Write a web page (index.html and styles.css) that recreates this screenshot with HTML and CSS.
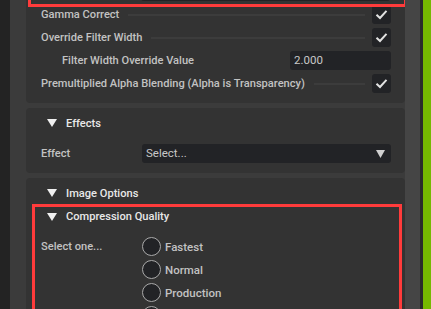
FILE: index.html
```html
<!DOCTYPE html>
<html lang="en">
<head>
    <meta charset="UTF-8">
    <title>Render Settings</title>
    <link rel="stylesheet" href="styles.css">
</head>
<body>
    <div class="edge"></div>
    <div class="scroll">
        <div class="content">
            <!-- Filtering -->
            <div class="card">
                <div class="focus focus-top">
                    <div class="row">
                        <div class="field wide"></div>
                    </div>
                </div>
                <div class="row">
                    <span class="label">Gamma Correct</span>
                    <span class="rule"></span>
                    <span class="check"><svg viewBox="0 0 19 19"><polyline points="4.5,9.8 8,13 14.5,5.8"/></svg></span>
                </div>
                <div class="row">
                    <span class="label">Override Filter Width</span>
                    <span class="rule"></span>
                    <span class="check"><svg viewBox="0 0 19 19"><polyline points="4.5,9.8 8,13 14.5,5.8"/></svg></span>
                </div>
                <div class="row">
                    <span class="label indent">Filter Width Override Value</span>
                    <span class="field number">2.000</span>
                </div>
                <div class="row">
                    <span class="label">Premultiplied Alpha Blending (Alpha is Transparency)</span>
                    <span class="rule"></span>
                    <span class="check"><svg viewBox="0 0 19 19"><polyline points="4.5,9.8 8,13 14.5,5.8"/></svg></span>
                </div>
            </div>

            <!-- Effects -->
            <div class="card">
                <div class="head">
                    <svg class="tri" viewBox="0 0 10 8"><polygon points="0,0 10,0 5,8"/></svg>
                    <span>Effects</span>
                </div>
                <div class="row spaced">
                    <span class="label">Effect</span>
                    <span class="field wide select">Select...
                        <svg class="arrow" viewBox="0 0 9 8"><polygon points="0,0 9,0 4.5,8"/></svg>
                    </span>
                </div>
            </div>

            <!-- Image Options -->
            <div class="card">
                <div class="head">
                    <svg class="tri" viewBox="0 0 10 8"><polygon points="0,0 10,0 5,8"/></svg>
                    <span>Image Options</span>
                </div>
                <div class="focus focus-inner">
                    <div class="head sub">
                        <svg class="tri" viewBox="0 0 10 8"><polygon points="0,0 10,0 5,8"/></svg>
                        <span>Compression Quality</span>
                    </div>
                    <div class="choice">
                        <span class="label pick">Select one...</span>
                        <div class="radios">
                            <label class="radio"><span class="dot"></span>Fastest</label>
                            <label class="radio"><span class="dot"></span>Normal</label>
                            <label class="radio"><span class="dot"></span>Production</label>
                            <label class="radio"><span class="dot"></span></label>
                        </div>
                    </div>
                </div>
            </div>
        </div>
    </div>
    <div class="track"></div>
    <div class="split"></div>
    <div class="accent"></div>
</body>
</html>
```

FILE: styles.css
```css
body {
    margin: 0;
    height: 309px;
    overflow: hidden;
    display: flex;
    background: #232323;
    font-family: Roboto, "Liberation Sans", sans-serif;
    font-size: 11.1px;
    font-weight: 500;
    color: #c2c2c2;
}

.edge {
    width: 10px;
    background: #232323;
}

.scroll {
    flex: 1;
    background: #3b3b3b;
    padding-left: 16px;
    overflow: hidden;
}

.content {
    margin-top: -27px;
    display: flex;
    flex-direction: column;
    gap: 5px;
}

.track {
    width: 15px;
    background: #454545;
}

.split {
    width: 3px;
    background: #2b2b2b;
}

.accent {
    width: 8px;
    background: #76b900;
}

/* Cards */
.card {
    background: #333333;
    border-radius: 4px;
    padding: 4px 0 8px;
}

.row {
    height: 23px;
    display: flex;
    align-items: center;
    padding: 0 14px 0 15px;
}

.row.spaced {
    margin-top: 8px;
}

.label {
    white-space: nowrap;
}

.label.indent {
    padding-left: 21px;
    flex: 1;
}

.rule {
    flex: 1;
    height: 2px;
    background: #3c3c3c;
    margin: 1px 7px 0 9px;
}

.check {
    width: 19px;
    height: 19px;
    border-radius: 3px;
    background: #222326;
}

.check svg {
    display: block;
    width: 19px;
    height: 19px;
    fill: none;
    stroke: #e2e2e2;
    stroke-width: 2;
}

.field {
    height: 19px;
    line-height: 19px;
    border-radius: 3px;
    background: #222326;
    padding: 0 4px;
    box-sizing: border-box;
    color: #c8c8c8;
    font-weight: 400;
    font-size: 11.5px;
}

.field.wide {
    margin-left: auto;
    width: 249px;
}

.field.number {
    width: 101px;
}

.select {
    display: flex;
    justify-content: space-between;
    align-items: center;
}

.arrow {
    width: 9px;
    height: 8px;
    fill: #d0d0d0;
    margin-right: 2px;
}

/* Section headers */
.head {
    height: 22px;
    display: flex;
    align-items: center;
    gap: 9px;
    padding-left: 21px;
    color: #e8e8e8;
}

.tri {
    width: 10px;
    height: 8px;
    fill: #f0f0f0;
}

.head.sub {
    height: 19px;
    padding-left: 12px;
}

/* Highlight frames */
.focus {
    border: 3px solid #ff3b3b;
    position: relative;
}

.focus-top {
    margin: 0 -2px -4px 2px;
    padding-bottom: 1px;
}

.focus-top .row {
    padding: 0 14px 0 13px;
}

.focus-inner {
    margin: 0 3px 0 6px;
    height: 120px;
}

.choice {
    display: flex;
    margin-top: 9px;
    padding-left: 6px;
}

.label.pick {
    width: 101px;
    padding-top: 5px;
}

.radios {
    display: flex;
    flex-direction: column;
}

.radio {
    height: 23px;
    display: flex;
    align-items: center;
    gap: 4px;
    font-size: 11.5px;
}

.dot {
    width: 17px;
    height: 17px;
    border-radius: 50%;
    border: 1px solid #a9a9a9;
    background: #222326;
}
```
